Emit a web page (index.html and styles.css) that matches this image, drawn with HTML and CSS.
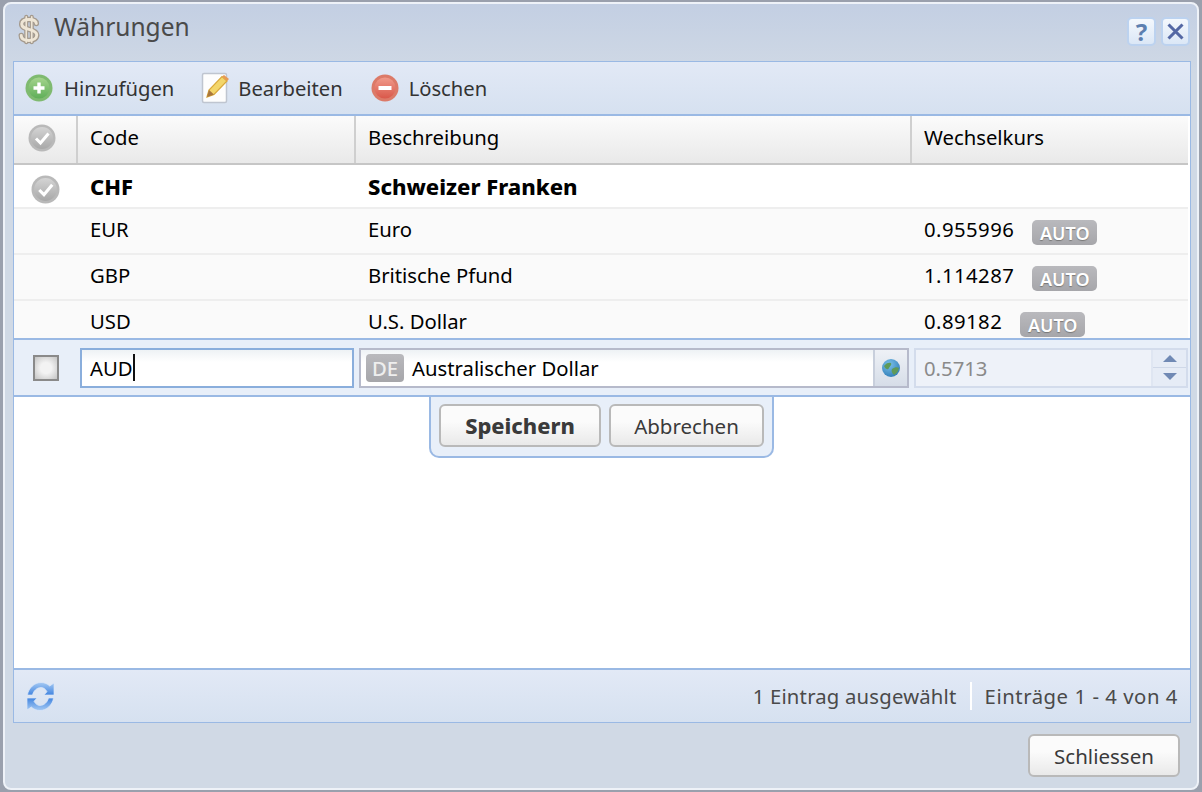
FILE: index.html
```html
<!DOCTYPE html>
<html lang="de">
<head>
<meta charset="utf-8">
<title>Währungen</title>
<link rel="stylesheet" href="styles.css">
</head>
<body>
<div class="window">
  <header class="titlebar">
    <svg class="title-icon" width="24" height="31" viewBox="0 0 26 34">
      <g fill="none" stroke-linecap="round" stroke-linejoin="round">
        <path d="M21 10.500C21 7 17.500 6 13 6S5 7.500 5 11s3 4.500 8 5.800 8.500 2.700 8.500 6.200S18 29 13 29s-8.500-1.500-8.500-5.500" stroke="#a49a8e" stroke-width="6"/>
        <path d="M10 3v28M16 3v28" stroke="#a49a8e" stroke-width="4.500"/>
        <path d="M21 10.500C21 7 17.500 6 13 6S5 7.500 5 11s3 4.500 8 5.800 8.500 2.700 8.500 6.200S18 29 13 29s-8.500-1.500-8.500-5.500" stroke="#efe6d6" stroke-width="3.200"/>
        <path d="M10 3v28M16 3v28" stroke="#efe6d6" stroke-width="1.800"/>
      </g>
    </svg>
    <h1 class="title">Währungen</h1>
    <div class="title-tools">
      <button class="tool-btn help">?</button>
      <button class="tool-btn">
        <svg width="21" height="21" viewBox="0 0 18 18"><path d="M3 3l12 12M15 3L3 15" stroke="#5468a4" stroke-width="2.600" fill="none"/></svg>
      </button>
    </div>
  </header>

  <main class="panel">
    <div class="toolbar">
      <span class="tbtn tbtn-add">
        <svg class="soft" width="28" height="28" viewBox="0 0 28 28">
          <defs><linearGradient id="g1" x1="0" y1="0" x2="0" y2="1"><stop offset="0" stop-color="#a5d48d"/><stop offset="1" stop-color="#5fae58"/></linearGradient></defs>
          <circle cx="14" cy="14" r="13.500" fill="#7fba70"/><circle cx="14" cy="14" r="10.500" fill="url(#g1)"/>
          <path d="M14 8.500v11M8.500 14h11" stroke="#fff" stroke-width="3.400"/>
        </svg>Hinzufügen
      </span>
      <span class="tbtn tbtn-edit">
        <svg class="soft" width="30" height="32" viewBox="0 0 30 32">
          <rect x="1.500" y="1.500" width="24" height="29" rx="1.500" fill="#fdfdfd" stroke="#bfc5d0" stroke-width="1.500"/>
          <path d="M6 25l2-7L21 4.500l5 4.500L13 22.500z" fill="#f3d66b" stroke="#d9a83a" stroke-width="1.200"/>
          <path d="M21 4.500l2-1.500 5 4-2 2z" fill="#e79a55"/>
          <path d="M6 25l2-7 5 4.500z" fill="#a9763d"/>
        </svg>Bearbeiten
      </span>
      <span class="tbtn tbtn-del">
        <svg class="soft" width="28" height="28" viewBox="0 0 28 28">
          <defs><linearGradient id="g2" x1="0" y1="0" x2="0" y2="1"><stop offset="0" stop-color="#f09a8a"/><stop offset="1" stop-color="#d9584a"/></linearGradient></defs>
          <circle cx="14" cy="14" r="13.500" fill="#dc7a68"/><circle cx="14" cy="14" r="10.500" fill="url(#g2)"/>
          <path d="M7.500 14h13" stroke="#fff" stroke-width="4"/>
        </svg>Löschen
      </span>
    </div>

    <div class="grid-head">
      <div class="hcell hcell-check">
        <svg class="soft" width="28" height="28" viewBox="0 0 28 28"><use href="#check"/></svg>
      </div>
      <div class="hcell">Code</div>
      <div class="hcell">Beschreibung</div>
      <div class="hcell hcell-last">Wechselkurs</div>
    </div>

    <div class="grid-body">
      <div class="row row-default">
        <div class="cell cell-check">
          <svg class="soft" width="29" height="29" viewBox="0 0 28 28">
            <defs>
              <linearGradient id="g3" x1="0" y1="0" x2="0" y2="1"><stop offset="0" stop-color="#d4d4d4"/><stop offset="1" stop-color="#a8a8a8"/></linearGradient>
              <g id="check">
                <circle cx="14" cy="14" r="13.500" fill="#b9b9b9"/><circle cx="14" cy="14" r="11" fill="url(#g3)"/>
                <path d="M8 14.500l4.500 4.500L20.500 9.500" fill="none" stroke="#fff" stroke-width="3"/>
              </g>
            </defs>
            <use href="#check"/>
          </svg>
        </div>
        <div class="cell">CHF</div>
        <div class="cell">Schweizer Franken</div>
        <div class="cell"></div>
      </div>
      <div class="row">
        <div class="cell"></div><div class="cell">EUR</div><div class="cell">Euro</div>
        <div class="cell"><span class="num">0.955996</span><span class="badge">AUTO</span></div>
      </div>
      <div class="row">
        <div class="cell"></div><div class="cell">GBP</div><div class="cell">Britische Pfund</div>
        <div class="cell"><span class="num">1.114287</span><span class="badge">AUTO</span></div>
      </div>
      <div class="row row-usd">
        <div class="cell"></div><div class="cell">USD</div><div class="cell">U.S. Dollar</div>
        <div class="cell"><span class="num">0.89182</span><span class="badge">AUTO</span></div>
      </div>

      <div class="edit-row">
        <div class="edit-check"><span class="checkbox"></span></div>
        <div class="field field-code">AUD<span class="caret"></span></div>
        <div class="field field-desc">
          <span class="lang">DE</span><span class="desc-text">Australischer Dollar</span>
          <span class="globe">
            <svg class="soft" width="20" height="20" viewBox="0 0 20 20">
              <defs><radialGradient id="g4" cx=".4" cy=".3" r=".8"><stop offset="0" stop-color="#7cc1ea"/><stop offset="1" stop-color="#2a78b4"/></radialGradient></defs>
              <circle cx="10" cy="10" r="9" fill="url(#g4)"/>
              <path d="M3 8c2-3 5-4 7-3 1 2-1 3-2 5s-3 2-5-2zM11 11c3-2 5-2 7-1-1 4-3 6-5 7-2-2-3-4-2-6z" fill="#5f9a58"/>
            </svg>
          </span>
        </div>
        <div class="field field-rate">
          <span class="rate-text">0.5713</span>
          <span class="spin">
            <span class="spin-btn"><svg width="18" height="9" viewBox="0 0 18 9"><path d="M9 1l7 7H2z" fill="#7089b4"/></svg></span>
            <span class="spin-btn"><svg width="18" height="9" viewBox="0 0 18 9"><path d="M2 1h14l-7 7z" fill="#7089b4"/></svg></span>
          </span>
        </div>
      </div>
      <div class="edit-popup">
        <button class="btn btn-primary">Speichern</button>
        <button class="btn btn-cancel">Abbrechen</button>
      </div>
    </div>

    <footer class="pager">
      <svg class="refresh soft" width="29" height="29" viewBox="0 0 29 29">
        <defs>
          <linearGradient id="g5" x1="0" y1="0" x2="0" y2="1"><stop offset="0" stop-color="#a5c9f3"/><stop offset="1" stop-color="#4285e0"/></linearGradient>
          <path id="arc" d="M1.500 13C2.500 6 8.500.5 15 .5c3.500 0 6.500 1.300 8.700 3.500L28 1v12H18l3-3.300C19.500 7 17.500 5.500 15 5.500c-4 0-7.500 3.300-8.500 7.500z" fill="url(#g5)" stroke="#dbe7f8" stroke-width=".7"/>
        </defs>
        <use href="#arc"/>
        <use href="#arc" transform="rotate(180 14.500 14.500)"/>
      </svg>
      <span class="pager-info pager-selected">1 Eintrag ausgewählt</span>
      <span class="pager-info pager-range">Einträge 1 - 4 von 4</span>
    </footer>
  </main>

  <footer class="actions">
    <button class="btn btn-close">Schliessen</button>
  </footer>
</div>
</body>
</html>
```

FILE: styles.css
```css
* { box-sizing: border-box; }
html, body { margin: 0; height: 100%; background: #9aa0ad; overflow: hidden; }
body { font-family: "Noto Sans", "Open Sans", sans-serif; font-size: 20.3px; color: #000; }

.soft { filter: blur(.35px); flex: none; }

.window {
  margin: 2px 3px 0;
  height: 788px;
  border: 2px solid #eef2f8;
  border-radius: 8px;
  background: linear-gradient(to bottom, #c3cfe3 0, #d0d9e5 70px, #d0d9e5 100%);
  display: flex;
  flex-direction: column;
  padding: 0 6px 0 8px;
}

.titlebar { height: 57px; padding-bottom: 7px; display: flex; align-items: center; flex: none; }
.title-icon { margin-left: 4px; flex: none; filter: blur(.5px); }
.title { margin: 0 0 4px 13px; font-size: 24.5px; font-weight: 400; color: #4a4a4a; line-height: 1; }
.title-tools { margin: 4px 1px 0 auto; display: flex; gap: 5px; }
.tool-btn {
  width: 29px; height: 29px; padding: 0; border: 2px solid #bcd2ef; border-radius: 5px;
  background: linear-gradient(to bottom, #f4f8fd, #dbe7f6);
  font: 700 24px "Noto Sans", sans-serif; color: #5c7fb0;
  display: flex; align-items: center; justify-content: center;
}

.panel {
  flex: none; height: 662px; border: 1px solid #9ab9e4; display: flex; flex-direction: column;
  background: #fff;
}

.toolbar {
  height: 54px; flex: none; display: flex; align-items: center; padding: 0 0 1px 11px;
  background: linear-gradient(to bottom, #e2e9f6, #d6e1f0);
  border-bottom: 2px solid #9ab9e4;
  color: #333;
  font-size: 20.2px;
}
.tbtn { display: flex; align-items: center; gap: 11px; }
.tbtn-edit { margin-left: 27px; gap: 7px; }
.tbtn-del { margin-left: 28px; gap: 10px; }

.grid-head {
  height: 49px; flex: none; display: grid; grid-template-columns: 64px 278px 556px 1fr;
  border-bottom: 2px solid #c6c6c6; margin-right: 2px;
  background: linear-gradient(to bottom, #fbfbfb, #e9e9e9);
}
.hcell { display: flex; align-items: center; padding: 0 0 6px 12px; border-right: 2px solid #cfcfcf; }
.hcell-check { justify-content: center; padding: 0 7px 4px 0; }
.hcell-last { border-right: 0; }

.grid-body { flex: 1; position: relative; display: flex; flex-direction: column; }

.row { display: grid; grid-template-columns: 64px 278px 556px 1fr; height: 46px; flex: none; background: #fafafa; border-bottom: 2px solid #eeeeee; margin-right: 2px; overflow: hidden; }
.row-default { height: 44px; background: #fff; font-weight: 800; font-size: 22px; }
.row-usd { height: 37px; border-bottom: 0; align-items: start; }
.cell { display: flex; align-items: center; padding-left: 12px; height: 100%; padding-bottom: 5px; }
.row-default .cell { padding-bottom: 0; }
.row-default .cell-check { padding: 6px 0 0 17px; }
.row-usd .cell { height: 42px; padding-bottom: 3px; }
.num { letter-spacing: .45px; }
.badge {
  margin: 8px 0 0 18px; width: 65px; height: 25px; border-radius: 5px; background: linear-gradient(to bottom, #b9b9bd, #a6a6aa);
  color: #fff; font-size: 18px; font-weight: 600; display: flex; align-items: center; justify-content: center; text-shadow: 0 1px 1px #777;
}

.edit-row {
  height: 59px; flex: none; background: #e8eff9; border-top: 2px solid #9ab9e4; border-bottom: 2px solid #9ab9e4;
  display: grid; grid-template-columns: 61px 274px 550px 274px; column-gap: 5px; align-items: center;
}
.edit-check { display: flex; justify-content: center; padding-left: 3px; }
.checkbox { width: 26px; height: 26px; border: 2px solid #8a8a8a; background: radial-gradient(circle, #f3f3f3 35%, #c4c4c4 100%); display: block; }
.field { height: 40px; display: flex; align-items: center; }
.field-code { border: 2px solid #8aaedc; padding-left: 8px; background: linear-gradient(to bottom, #eef2f5, #fff 12px); }
.caret { width: 2px; height: 27px; background: #111; }
.field-desc { border: 2px solid #b6bacb; background: linear-gradient(to bottom, #eef2f5, #fff 12px); padding-left: 5px; }
.lang { width: 38px; height: 28px; background: linear-gradient(to bottom, #b9b9bd, #a6a6aa); border-radius: 4px; color: #eee; font-weight: 500; display: flex; align-items: center; justify-content: center; flex: none; }
.desc-text { margin-left: 8px; }
.globe { margin-left: auto; width: 34px; height: 100%; border-left: 2px solid #c8cfdc; background: linear-gradient(to bottom, #eef1f6, #d6dde8); display: flex; align-items: center; justify-content: center; flex: none; }
.field-rate { border: 2px solid #d3dcec; background: #eef2f9; padding-left: 8px; color: #8a8a8a; }
.spin { margin-left: auto; width: 35px; height: 100%; display: flex; flex-direction: column; border-left: 2px solid #dfe6f2; }
.spin-btn { flex: 1; display: flex; align-items: center; justify-content: center; background: #e6ecf6; }
.spin-btn + .spin-btn { border-top: 1px solid #cfd8e8; }

.edit-popup {
  position: absolute; left: 415px; top: 232px; width: 345px; height: 61px;
  background: #e8eff9; border: 2px solid #9ab9e4; border-top: 0; border-radius: 0 0 10px 10px;
  display: flex; gap: 8px; padding: 7px 0 0 8px; z-index: 1;
}
.btn {
  border: 2px solid #b9b9b9; border-radius: 6px; background: linear-gradient(to bottom, #fbfbfb 40%, #e9e9e9);
  font: 400 20.5px "Noto Sans", sans-serif; color: #3a3a3a; padding: 0;
}
.btn-primary { width: 162px; height: 43px; font-size: 21.8px; font-weight: 800; }
.btn-cancel { width: 155px; height: 43px; }
.btn-close { width: 152px; height: 43px; }

.pager {
  height: 54px; flex: none; display: flex; align-items: center; padding-left: 12px; color: #4a4a4a;
  background: linear-gradient(to bottom, #e2e9f6, #d6e1f0);
  border-top: 2px solid #9ab9e4;
}
.refresh { margin-right: auto; }
.pager-selected { height: 28px; display: flex; align-items: center; padding-right: 13px; border-right: 2px solid #fff; margin-right: 13px; letter-spacing: .2px; }
.pager-range { padding-right: 12px; letter-spacing: .55px; }

.actions { flex: 1; display: flex; justify-content: flex-end; align-items: flex-start; padding: 11px 11px 0 0; }
```
